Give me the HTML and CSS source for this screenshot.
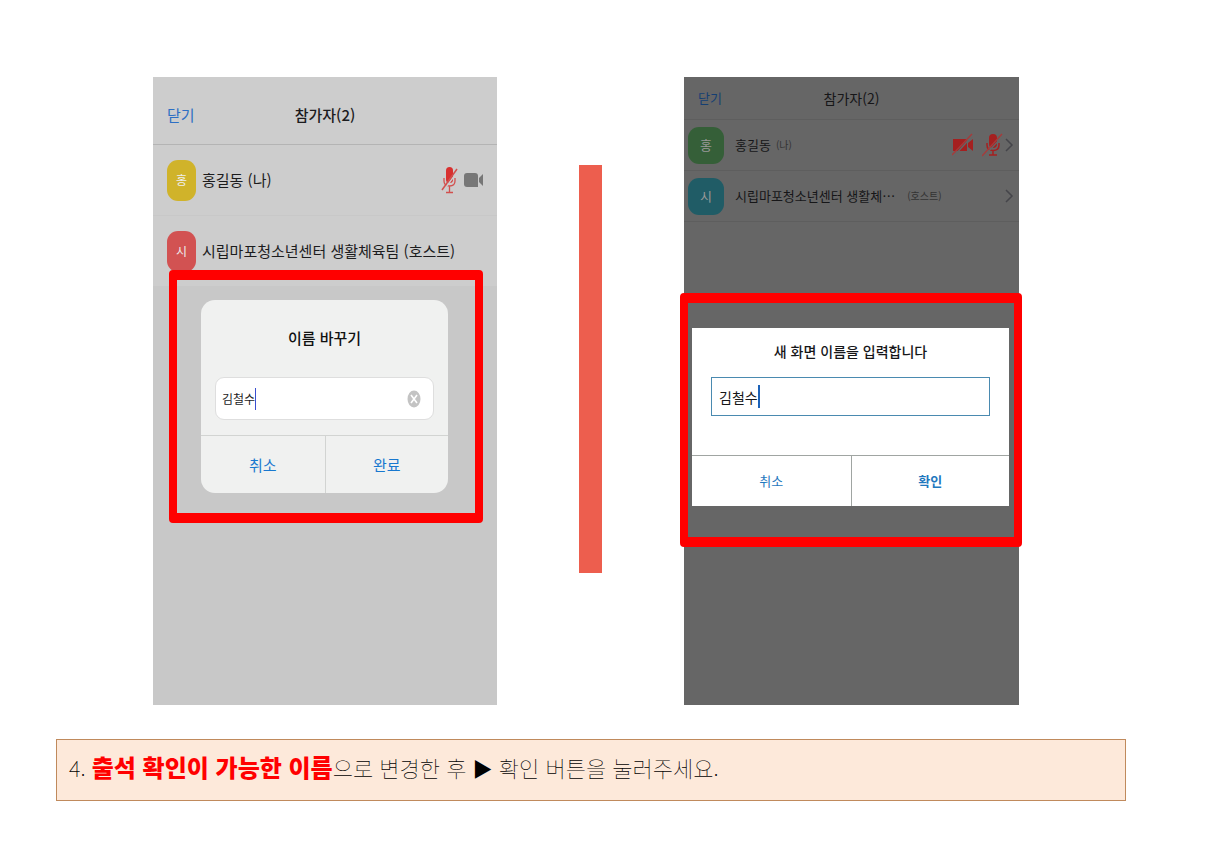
FILE: index.html
```
<!DOCTYPE html>
<html lang="ko">
<head>
    <meta charset="UTF-8">
    <meta name="viewport" content="width=device-width, initial-scale=1.0">
    <title>이름 바꾸기 안내</title>
    <link rel="stylesheet" href="styles.css">
</head>
<body>

    <main class="guide">
        <div class="screens">

            <!-- iPhone -->
            <section class="phone ios">
                <header class="phone-header">
                    <button type="button" class="close">닫기</button>
                    <h2>참가자(2)</h2>
                </header>
                <ul class="people">
                    <li>
                        <span class="avatar yellow">홍</span>
                        <span class="name">홍길동 (나)</span>
                        <span class="icons">
                            <svg width="18" height="28" viewBox="0 0 18 28">
                                <rect x="5" y="1" width="7" height="16" rx="3.500" fill="#d8302f"/>
                                <path d="M3 12v3c0 3 2 5 5.500 5s5.500-2 5.500-5v-3M8.500 20v6M5 26.500h7" fill="none" stroke="#d2504e" stroke-width="1.300"/>
                                <path d="M2 25L17 5" stroke="#cdcdcd" stroke-width="1.500"/>
                                <path d="M1 24L16 3" stroke="#d2504e" stroke-width="1.500"/>
                            </svg>
                            <svg width="20" height="16" viewBox="0 0 20 16">
                                <path d="M3 1h8q3 0 3 3v11H3q-3 0-3-3V4q0-3 3-3z" fill="#777"/>
                                <path d="M15 6l4-4v12l-4-4z" fill="#777"/>
                            </svg>
                        </span>
                    </li>
                    <li>
                        <span class="avatar red">시</span>
                        <span class="name">시립마포청소년센터 생활체육팀 (호스트)</span>
                    </li>
                </ul>
                <div class="highlight">
                    <form class="dialog">
                        <label class="dialog-title" for="ios-name">이름 바꾸기</label>
                        <div class="field">
                            <input type="text" id="ios-name" value="김철수">
                            <span class="caret"></span>
                            <button type="reset" class="clear" aria-label="지우기">
                                <svg width="14" height="18" viewBox="0 0 14 18">
                                    <ellipse cx="7" cy="9" rx="6.500" ry="8.500" fill="#c3c3c3"/>
                                    <path d="M4 5l6 8M10 5l-6 8" stroke="#fff" stroke-width="1.600"/>
                                </svg>
                            </button>
                        </div>
                        <div class="actions">
                            <button type="button">취소</button>
                            <button type="button">완료</button>
                        </div>
                    </form>
                </div>
            </section>

            <div class="divider"></div>

            <!-- Android -->
            <section class="phone android">
                <header class="phone-header">
                    <button type="button" class="close">닫기</button>
                    <h2>참가자(2)</h2>
                </header>
                <ul class="people">
                    <li>
                        <span class="avatar green">홍</span>
                        <span class="name">홍길동</span>
                        <span class="role">(나)</span>
                        <span class="icons">
                            <svg width="22" height="24" viewBox="0 0 22 24">
                                <path d="M1 6h14v12H1zM16 10l5-4v12l-5-4z" fill="#a52020"/>
                                <path d="M2 23L21 2" stroke="#666" stroke-width="1.500"/>
                                <path d="M0 22L20 1" stroke="#a83a3a" stroke-width="1.300"/>
                            </svg>
                            <svg width="22" height="24" viewBox="0 0 22 24">
                                <rect x="7" y="1" width="8" height="14" rx="4" fill="#a52020"/>
                                <path d="M5 10v2c0 3.500 2.500 5.500 6 5.500s6-2 6-5.500v-2M11 17v5M7 22h8" fill="none" stroke="#a52020" stroke-width="1.500"/>
                                <path d="M2 23L21 3" stroke="#666" stroke-width="1.300"/>
                                <path d="M0 23L20 1" stroke="#a83a3a" stroke-width="1.300"/>
                            </svg>
                        </span>
                        <svg class="chevron" width="10" height="14" viewBox="0 0 10 14"><path d="M2 1l6 6-6 6" fill="none" stroke="#45454a" stroke-width="1.500"/></svg>
                    </li>
                    <li>
                        <span class="avatar teal">시</span>
                        <span class="name">시립마포청소년센터 생활체…</span>
                        <span class="role host">(호스트)</span>
                        <svg class="chevron" width="10" height="14" viewBox="0 0 10 14"><path d="M2 1l6 6-6 6" fill="none" stroke="#45454a" stroke-width="1.500"/></svg>
                    </li>
                </ul>
                <div class="highlight">
                    <form class="dialog">
                        <label class="dialog-title" for="android-name">새 화면 이름을 입력합니다</label>
                        <div class="field">
                            <input type="text" id="android-name" value="김철수">
                            <span class="caret"></span>
                        </div>
                        <div class="actions">
                            <button type="button">취소</button>
                            <button type="button" class="primary">확인</button>
                        </div>
                    </form>
                </div>
            </section>

        </div>

        <p class="note">4. <strong>출석 확인이 가능한 이름</strong>으로 변경한 후 <span class="arrow">▶</span> 확인 버튼을 눌러주세요.</p>
    </main>

</body>
</html>
```
FILE: styles.css
```
* {
    box-sizing: border-box;
}

body {
    margin: 0;
    background-color: #fff;
    color: #1c1c1e;
    font-family: "Noto Sans CJK KR", "Noto Sans", sans-serif;
}

button,
input {
    padding: 0;
    border: none;
    background: none;
    font: inherit;
    color: inherit;
}

button {
    cursor: pointer;
}

input:focus {
    outline: none;
}

.guide {
    padding: 77px 88px 60px 56px;
}

.screens {
    display: grid;
    grid-template-columns: minmax(0, 344fr) 23px minmax(0, 335fr);
    column-gap: 82px;
    padding: 0 107px 0 97px;
}

.divider {
    margin: 88px 0 132px;
    background-color: #ed5e4e;
}

/* Phone screens */
.phone {
    position: relative;
    min-height: 628px;
    font-size: 15px;
    line-height: 20px;
}

.phone-header {
    display: grid;
    grid-template-columns: 1fr auto 1fr;
    align-items: center;
    padding: 0 14px;
}

.phone-header h2 {
    margin: 0;
    font-size: inherit;
    font-weight: 500;
}

.close {
    justify-self: start;
}

.people {
    margin: 0;
    padding: 0;
    list-style: none;
}

.people li {
    display: flex;
    align-items: center;
    white-space: nowrap;
}

.avatar {
    display: flex;
    flex: none;
    align-items: center;
    justify-content: center;
    border-radius: 11px;
}

.icons {
    display: flex;
    align-items: center;
    gap: 5px;
    margin-left: auto;
}

/* Red frame and the dialog inside it */
.highlight {
    position: absolute;
    border: solid #f00;
    border-width: 10px 8px;
    border-radius: 4px;
}

.dialog {
    display: flex;
    flex-direction: column;
}

.dialog-title {
    text-align: center;
}

.field {
    display: flex;
    align-items: center;
}

.actions {
    display: grid;
    grid-template-columns: minmax(0, 1fr) minmax(0, 1fr);
}

/* iPhone */
.ios {
    background-color: #c8c8c8;
}

.ios .phone-header {
    height: 67px;
    padding-top: 8px;
    background-color: #cdcdcd;
}

.ios .close {
    color: #2d6fc4;
}

.ios .people {
    border-top: 1px solid #b4b4b4;
}

.ios .people li {
    height: 71px;
    padding: 0 13px 0 14px;
    gap: 6px;
    background-color: #cdcdcd;
    border-bottom: 1px solid #c8c8c8;
}

.ios .avatar {
    width: 29px;
    height: 41px;
    color: #eee;
    font-size: 12px;
}

.yellow {
    background-color: #d0b32a;
}

.red {
    background-color: #d25252;
}

.ios .highlight {
    top: 193px;
    left: 16px;
    right: 14px;
    padding: 20px 27px 20px 24px;
}

.ios .dialog {
    border-radius: 14px;
    background-color: #f0f1f0;
}

.ios .dialog-title {
    padding: 28px 0 29px;
    color: #111;
    font-weight: 500;
}

.ios .field {
    height: 43px;
    margin: 0 14px 15px;
    padding: 0 12px 0 6px;
    border: 1px solid #dedede;
    border-radius: 9px;
    background-color: #fff;
    font-size: 12px;
}

.ios .field input {
    width: 33px;
}

.ios .caret {
    width: 1px;
    height: 22px;
    background-color: #3a4fd0;
}

.clear {
    height: 18px;
    margin-left: auto;
}

.clear svg {
    display: block;
}

.ios .actions {
    border-top: 1px solid #d2d4d2;
}

.ios .actions button {
    height: 57px;
    color: #1878cf;
}

.ios .actions button + button {
    border-left: 1px solid #d2d4d2;
}

/* Android */
.android {
    background-color: #666;
    color: #161618;
    font-size: 13px;
}

.android .phone-header {
    height: 42px;
}

.android .phone-header h2 {
    font-size: 14px;
    font-weight: 400;
}

.android .close {
    color: #153f73;
}

.android .people li {
    height: 51px;
    padding: 0 5px 0 4px;
    border-top: 1px solid #5e5e5e;
}

.android .people li:last-child {
    height: 52px;
    border-bottom: 1px solid #5e5e5e;
}

.android .avatar {
    width: 36px;
    height: 37px;
    margin-right: 11px;
    color: #999;
}

.green {
    background-color: #355f38;
}

.teal {
    background-color: #205c66;
}

.role {
    margin-left: 5px;
    color: #333;
    font-size: 10px;
}

.role.host {
    margin-left: 12px;
}

.android .icons {
    gap: 8px;
}

.chevron {
    flex: none;
}

.host + .chevron {
    margin-left: auto;
}

.android .highlight {
    top: 216px;
    left: -4px;
    right: -3px;
    padding: 25px 5px 31px 4px;
}

.android .dialog {
    background-color: #fff;
    font-size: 14px;
}

.android .dialog-title {
    padding: 13px 0 16px;
    font-weight: 500;
}

.android .field {
    height: 39px;
    margin: 0 19px 39px;
    padding: 0 7px;
    border: 1px solid #4a8ab0;
}

.android .field input {
    width: 39px;
}

.android .caret {
    width: 2px;
    height: 23px;
    background-color: #1c62b8;
}

.android .actions {
    border-top: 1px solid #a0a5a2;
}

.android .actions button {
    height: 50px;
    color: #1f78be;
    font-size: 13px;
}

.android .actions button + button {
    border-left: 1px solid #a0a5a2;
}

.android .actions .primary {
    font-weight: 700;
}

/* Caption */
.note {
    margin: 34px 0 0;
    padding: 9px 12px 13px;
    border: 1px solid #c08a5c;
    background-color: #fde9da;
    color: #000;
    font-size: 22px;
    font-weight: 100;
    line-height: 36px;
}

.note strong {
    color: #f00;
    font-size: 24px;
    font-weight: 900;
}

.note .arrow {
    font-size: 20px;
}
```
